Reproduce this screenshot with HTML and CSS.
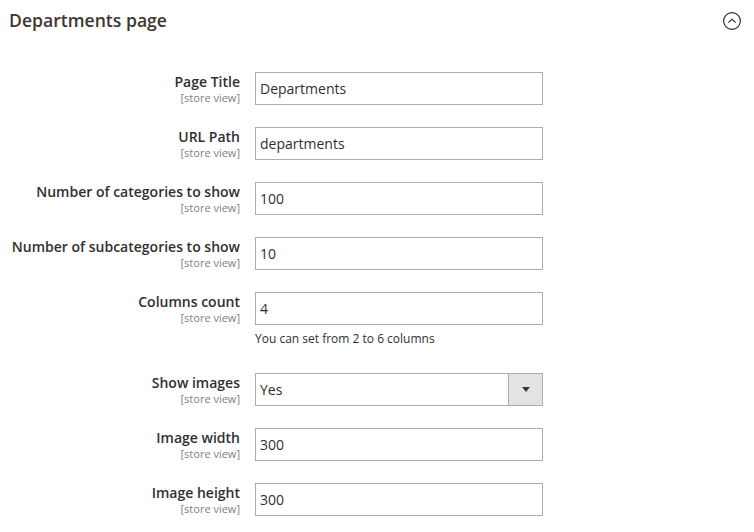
FILE: index.html
```html
<!DOCTYPE html>
<html>
<head>
<meta charset="utf-8">
<link rel="stylesheet" href="styles.css">
</head>
<body>
<div class="section">
  <div class="section-head">
    <h2 class="section-title">Departments page</h2>
    <svg class="toggle" width="20" height="20" viewBox="0 0 20 20">
      <circle cx="10" cy="10" r="8.4" fill="none" stroke="#303030" stroke-width="1.2"/>
      <path d="M6.3 11.6 L10 8.2 L13.7 11.6" fill="none" stroke="#303030" stroke-width="1.2"/>
    </svg>
  </div>
  <div class="fields">
    <div class="row">
      <div class="label"><span class="name">Page Title</span><span class="scope">[store view]</span></div>
      <div class="control"><div class="input">Departments</div></div>
    </div>
    <div class="row">
      <div class="label"><span class="name">URL Path</span><span class="scope">[store view]</span></div>
      <div class="control"><div class="input">departments</div></div>
    </div>
    <div class="row">
      <div class="label"><span class="name">Number of categories to show</span><span class="scope">[store view]</span></div>
      <div class="control"><div class="input">100</div></div>
    </div>
    <div class="row">
      <div class="label"><span class="name">Number of subcategories to show</span><span class="scope">[store view]</span></div>
      <div class="control"><div class="input">10</div></div>
    </div>
    <div class="row">
      <div class="label"><span class="name">Columns count</span><span class="scope">[store view]</span></div>
      <div class="control"><div class="input">4</div><p class="note">You can set from 2 to 6 columns</p></div>
    </div>
    <div class="row">
      <div class="label"><span class="name">Show images</span><span class="scope">[store view]</span></div>
      <div class="control"><div class="select"><span class="select-value">Yes</span><span class="select-arrow"></span></div></div>
    </div>
    <div class="row">
      <div class="label"><span class="name">Image width</span><span class="scope">[store view]</span></div>
      <div class="control"><div class="input">300</div></div>
    </div>
    <div class="row">
      <div class="label"><span class="name">Image height</span><span class="scope">[store view]</span></div>
      <div class="control"><div class="input">300</div></div>
    </div>
  </div>
</div>
</body>
</html>
```
FILE: styles.css
```css
html, body {
  margin: 0;
  padding: 0;
  background: #ffffff;
}
body {
  font-family: "Open Sans", "Liberation Sans", sans-serif;
  color: #303030;
}
.section-head {
  display: flex;
  justify-content: space-between;
  align-items: center;
  padding: 9px 12px 0 9px;
  height: 22px;
}
.section-title {
  margin: 0;
  font-size: 17.6px;
  font-weight: 600;
  line-height: 22px;
  color: #41362f;
}
.toggle {
  display: block;
  margin-top: 1px;
}
.fields {
  display: flex;
  flex-direction: column;
  gap: 22px;
  padding-top: 41px;
}
.row {
  display: grid;
  grid-template-columns: 240px 288px;
  column-gap: 15px;
  align-items: start;
}
.label {
  display: flex;
  flex-direction: column;
  align-items: flex-end;
  text-align: right;
}
.name {
  font-size: 14px;
  font-weight: 600;
  line-height: 18px;
  padding-top: 1px;
  color: #303030;
}
.scope {
  font-size: 11px;
  line-height: 11px;
  padding-top: 1px;
  color: #808080;
}
.input {
  box-sizing: border-box;
  height: 33px;
  border: 1px solid #adadad;
  padding: 0 4px;
  font-size: 14px;
  line-height: 31px;
  color: #303030;
  background: #fff;
}
.note {
  margin: 6px 0 4px;
  font-size: 12px;
  line-height: 16px;
  color: #303030;
}
.select {
  box-sizing: border-box;
  height: 33px;
  border: 1px solid #adadad;
  display: flex;
  background: #fff;
}
.select-value {
  flex: 1;
  padding: 0 4px;
  font-size: 14px;
  line-height: 31px;
}
.select-arrow {
  width: 33px;
  background: #e3e3e3;
  border-left: 1px solid #adadad;
  position: relative;
}
.select-arrow::after {
  content: "";
  position: absolute;
  left: 13px;
  top: 13px;
  border-left: 4px solid transparent;
  border-right: 4px solid transparent;
  border-top: 5px solid #41362f;
}
```
